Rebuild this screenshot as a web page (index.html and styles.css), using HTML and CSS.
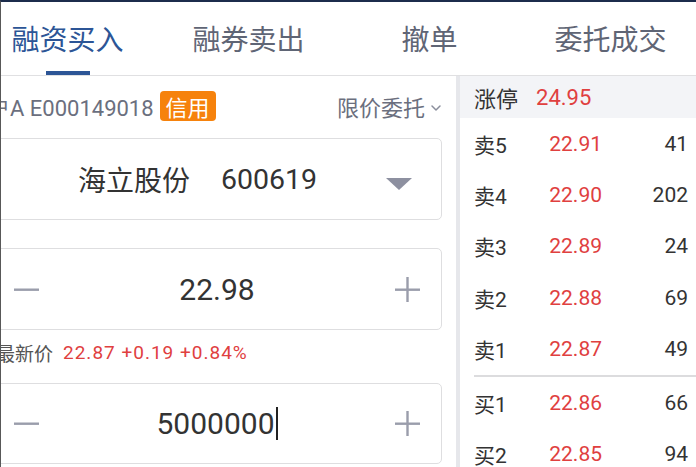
FILE: index.html
```html
<!DOCTYPE html>
<html lang="zh-CN">
<head>
<meta charset="utf-8">
<title>融资买入</title>
<link rel="stylesheet" href="styles.css">
</head>
<body>
<div class="app">
  <div class="tabs">
    <div class="tab active"><span class="tab-text">融资买入</span><i class="tab-bar"></i></div>
    <div class="tab"><span class="tab-text">融券卖出</span></div>
    <div class="tab"><span class="tab-text">撤单</span></div>
    <div class="tab"><span class="tab-text">委托成交</span></div>
  </div>
  <div class="main">
    <div class="form">
      <div class="acct">
        <span class="acct-text">账户A E000149018</span>
        <span class="badge">信用</span>
        <span class="order-type">限价委托
          <svg class="chev" width="12" height="8" viewBox="0 0 12 8"><path d="M2 2 L6 6 L10 2" fill="none" stroke="#8a8e9c" stroke-width="1.5" stroke-linecap="round" stroke-linejoin="round"/></svg>
        </span>
      </div>
      <div class="box stock">
        <span class="stock-name">海立股份</span>
        <span class="stock-code">600619</span>
        <svg class="tri" width="26" height="12" viewBox="0 0 26 12"><path d="M0 0 H26 L13 12 Z" fill="#8d90a0"/></svg>
      </div>
      <div class="box stepper price">
        <span class="step-btn"><svg width="25" height="25" viewBox="0 0 25 25"><rect x="0" y="11.5" width="25" height="2.4" fill="#9a9dab"/></svg></span>
        <span class="step-value">22.98</span>
        <span class="step-btn"><svg width="25" height="25" viewBox="0 0 25 25"><rect x="0" y="11.5" width="25" height="2.4" fill="#9a9dab"/><rect x="11.3" y="0" width="2.4" height="25" fill="#9a9dab"/></svg></span>
      </div>
      <div class="latest">
        <span class="latest-label">最新价</span>
        <span class="latest-value">22.87 +0.19 +0.84%</span>
      </div>
      <div class="box stepper qty">
        <span class="step-btn"><svg width="25" height="25" viewBox="0 0 25 25"><rect x="0" y="11.5" width="25" height="2.4" fill="#9a9dab"/></svg></span>
        <span class="step-value">5000000<i class="caret"></i></span>
        <span class="step-btn"><svg width="25" height="25" viewBox="0 0 25 25"><rect x="0" y="11.5" width="25" height="2.4" fill="#9a9dab"/><rect x="11.3" y="0" width="2.4" height="25" fill="#9a9dab"/></svg></span>
      </div>
    </div>
    <div class="book">
      <div class="limit"><span class="limit-label">涨停</span><span class="limit-value">24.95</span></div>
      <div class="row"><span class="lbl">卖5</span><span class="px">22.91</span><span class="vol">41</span></div>
      <div class="row"><span class="lbl">卖4</span><span class="px">22.90</span><span class="vol">202</span></div>
      <div class="row"><span class="lbl">卖3</span><span class="px">22.89</span><span class="vol">24</span></div>
      <div class="row"><span class="lbl">卖2</span><span class="px">22.88</span><span class="vol">69</span></div>
      <div class="row"><span class="lbl">卖1</span><span class="px">22.87</span><span class="vol">49</span></div>
      <div class="divider"></div>
      <div class="row"><span class="lbl">买1</span><span class="px">22.86</span><span class="vol">66</span></div>
      <div class="row"><span class="lbl">买2</span><span class="px">22.85</span><span class="vol">94</span></div>
    </div>
  </div>
</div>
</body>
</html>
```

FILE: styles.css
```css
* { box-sizing: border-box; }
html, body { margin: 0; padding: 0; background: #fff; }
body {
  font-family: Roboto, "Noto Sans CJK SC", sans-serif;
  color: #333;
}
.app {
  width: 696px;
  height: 467px;
  overflow: hidden;
  border-top: 2px solid #1c2c4c;
  border-left: 1px solid #585858;
  display: flex;
  flex-direction: column;
}

/* tabs */
.tabs {
  display: flex;
  flex: 0 0 auto;
  height: 74px;
  border-bottom: 1px solid #e0e0e2;
  margin-left: -24px;
}
.tab {
  flex: 0 0 181px;
  height: 73px;
  display: flex;
  flex-direction: column;
  align-items: center;
}
.tab-text {
  margin-top: 18px;
  font-size: 28px;
  line-height: 36px;
  color: #5f6575;
  font-family: "Noto Sans CJK SC", sans-serif;
}
.tab.active .tab-text { color: #2c5596; }
.tab-bar {
  margin-top: auto;
  width: 44px;
  height: 4px;
  background: #2c5596;
}

/* main */
.main {
  flex: 1 1 auto;
  display: flex;
  min-height: 0;
}
.form {
  flex: 0 0 464px;
  margin-left: -9px;
  padding-right: 14px;
  display: flex;
  flex-direction: column;
}
.acct {
  height: 60px;
  display: flex;
  align-items: center;
}
.acct-text {
  margin-left: -26px;
  font-size: 22px;
  color: #6b6f7e;
}
.badge {
  margin-left: 6px;
  width: 56px;
  height: 30px;
  border-radius: 4px;
  background: #f6820c;
  color: #fff;
  font-size: 22px;
  line-height: 30px;
  text-align: center;
  font-family: "Noto Sans CJK SC", sans-serif;
}
.order-type {
  margin-left: auto;
  display: flex;
  align-items: center;
  font-size: 22px;
  color: #6b6f7e;
  font-family: "Noto Sans CJK SC", sans-serif;
}
.chev { margin-left: 5px; margin-top: 3px; }

.box {
  height: 82px;
  border: 1px solid #dedee0;
  border-radius: 5px;
  display: flex;
  align-items: center;
  background: #fff;
}
.stock {
  margin-top: 2px;
  padding-left: 85px;
  font-size: 28px;
  color: #333;
}
.stock-name { font-family: "Noto Sans CJK SC", sans-serif; }
.stock-code { margin-left: 31px; font-size: 28.5px; }
.tri { margin-left: auto; margin-right: 29px; margin-top: 10px; }

.stepper {
  display: grid;
  grid-template-columns: 67px 1fr 67px;
  align-items: center;
}
.price { margin-top: 28px; }
.qty { margin-top: 9px; height: 81px; }
.step-btn {
  display: flex;
  justify-content: center;
  align-items: center;
}
.step-value {
  text-align: center;
  font-size: 30px;
  color: #333;
  display: flex;
  justify-content: center;
  align-items: center;
}
.caret {
  display: inline-block;
  width: 2px;
  height: 33px;
  margin-left: 1px;
  background: #222;
}

.latest {
  height: 44px;
  display: flex;
  align-items: center;
  padding-left: 4px;
  font-size: 19px;
}
.latest-label {
  color: #555;
  font-family: "Noto Sans CJK SC", sans-serif;
}
.latest-value {
  margin-left: 10px;
  color: #e0403f;
  letter-spacing: 1px;
}

/* order book */
.book {
  flex: 1 1 auto;
  border-left: 4px solid #e6e7eb;
  display: flex;
  flex-direction: column;
}
.limit {
  height: 42px;
  flex: 0 0 42px;
  background: #f3f4f7;
  display: flex;
  align-items: center;
  padding-left: 14px;
  font-size: 22px;
}
.limit-label { color: #333; font-family: "Noto Sans CJK SC", sans-serif; }
.limit-value { margin-left: 18px; color: #e0403f; }
.row {
  flex: 0 0 51.4px;
  display: grid;
  grid-template-columns: 60px 68px 1fr;
  align-items: center;
  padding: 0 8px 0 14px;
  font-size: 21px;
}
.lbl { color: #333; }
.px { color: #e0403f; text-align: right; }
.vol { color: #333; text-align: right; }
.divider {
  flex: 0 0 2px;
  margin-left: 14px;
  background: #dcdcde;
}
```
